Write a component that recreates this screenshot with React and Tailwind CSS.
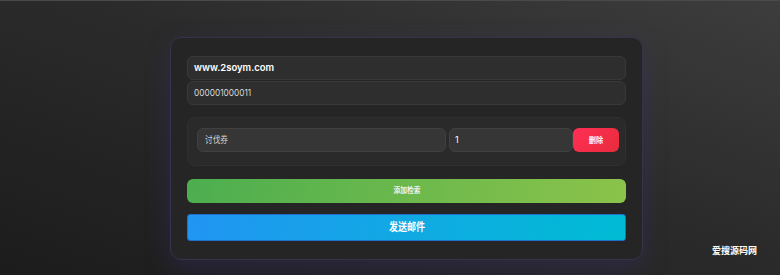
const CJK = "font-['Inter','Noto_Sans_CJK_SC',sans-serif]"

function Field({ value, className = '' }) {
  return (
    <div className={`h-6 flex items-center px-[6px] bg-[#2e2e2e] border border-[#393939] rounded-md ${className}`}>
      {value}
    </div>
  )
}

export default function App() {
  return (
    <div className={`relative w-full h-[275px] overflow-hidden bg-[linear-gradient(200deg,#3d3d3d_0%,#2b2b2b_45%,#1c1c1c_100%)] ${CJK}`}>
      <div className="h-px bg-[#4a4a4a]" />
      <div className="flex pt-[36px] pl-[170px]">
        <div className="w-[473px] h-[223px] bg-[#252525] rounded-[11px] border border-[#34334a] shadow-[0_8px_24px_rgba(60,50,120,0.35)] pt-[18px] px-[16px]">
          <Field value="www.2soym.com" className="text-[9.5px] font-semibold text-white" />
          <Field value="000001000011" className="mt-px text-[8.3px] text-[#d8d8d8]" />

          <div className="mt-3 h-[49px] bg-[#2a2a2a] border border-[#303030] rounded-lg pt-[10px] pl-[9px] pr-[6px]">
            <div className="flex h-6">
              <div className="w-[249px] flex items-center px-[7px] bg-[#363636] border border-[#404040] rounded-md text-[9px] text-[#cfcfcf]">
                <span className="inline-block origin-left scale-x-[0.85]">讨伐券</span>
              </div>
              <div className="ml-[3px] w-[124px] flex items-center px-[5px] bg-[#363636] border border-[#404040] rounded-md text-[9px] text-white">
                1
              </div>
              <button className="w-[46px] rounded-md bg-[linear-gradient(135deg,#ff2f55,#e82c3c)] text-[8px] font-bold text-white">
                <span className="inline-block scale-x-[0.9]">删除</span>
              </button>
            </div>
          </div>

          <button className="mt-[13px] w-full h-6 rounded-md bg-[linear-gradient(100deg,#4cae4f,#8bc34a)] text-[7.5px] font-bold text-[#f2f2f2]">
            <span className="inline-block scale-x-[0.9]">添加检索</span>
          </button>

          <button className="mt-[11px] w-full h-[27px] rounded-[3px] border border-[#1f6fc8] bg-[linear-gradient(100deg,#2196f3,#00bcd4)] text-[11px] font-bold text-white">
            <span className="inline-block scale-x-[0.82]">发送邮件</span>
          </button>
        </div>
      </div>
      <div className="absolute left-[712px] top-[244px] text-[9px] font-bold text-white">
        爱搜源码网
      </div>
    </div>
  )
}
